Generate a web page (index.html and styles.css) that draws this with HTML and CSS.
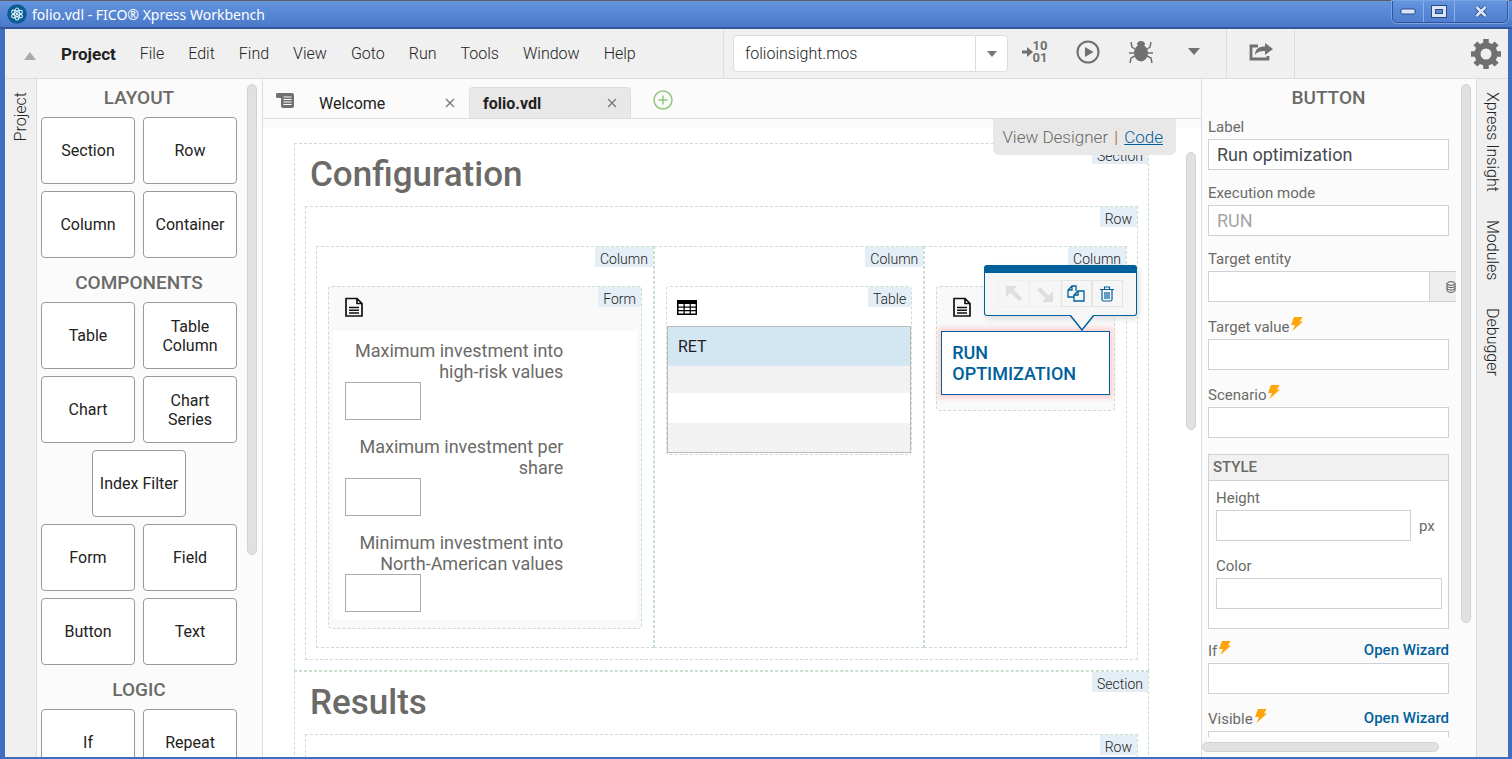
FILE: index.html
```
<!DOCTYPE html>
<html lang="en">
<head>
    <meta charset="UTF-8">
    <meta name="viewport" content="width=device-width, initial-scale=1.0">
    <title>folio.vdl - FICO® Xpress Workbench</title>
    <link rel="stylesheet" href="styles.css">
</head>
<body>
    <svg class="defs" width="0" height="0" aria-hidden="true">
        <symbol id="bolt" viewBox="0 0 12 14">
            <path d="M3 0h8.500L9 4.500h3L1.500 14 4 8H0z" fill="#ffa50a"/>
        </symbol>
        <symbol id="doc" viewBox="0 0 18 20">
            <path d="M1 1.500h11l5 5v12.500H1zM12 1.500v5h5" fill="none" stroke="#111" stroke-width="1.700" stroke-linejoin="round"/>
            <path d="M4 10.500h10M4 13.200h10M4 16h10" stroke="#111" stroke-width="1.400"/>
        </symbol>
        <symbol id="close" viewBox="0 0 10 10">
            <path d="M1 1l8 8M9 1L1 9" stroke="#777" stroke-width="1.300"/>
        </symbol>
    </svg>

    <div class="titlebar">
        <svg width="20" height="20" viewBox="0 0 20 20">
            <circle cx="10" cy="10" r="9.800" fill="#0a5d92"/>
            <g fill="none" stroke="#d4eef8" stroke-width="1.100">
                <ellipse cx="10" cy="10" rx="6" ry="2.400" transform="rotate(30 10 10)"/>
                <ellipse cx="10" cy="10" rx="6" ry="2.400" transform="rotate(90 10 10)"/>
                <ellipse cx="10" cy="10" rx="6" ry="2.400" transform="rotate(150 10 10)"/>
            </g>
            <circle cx="10" cy="10" r="1.300" fill="#d4eef8"/>
        </svg>
        <span class="window-title">folio.vdl - FICO® Xpress Workbench</span>
        <div class="window-buttons">
            <button aria-label="Minimize"><svg width="16" height="8" viewBox="0 0 16 8"><rect x="1" y="1" width="14" height="5" rx="1" fill="#dbe6f7" stroke="#2a4a85"/></svg></button>
            <button aria-label="Maximize"><svg width="16" height="13" viewBox="0 0 16 13"><rect x="2.500" y="2.500" width="11" height="8" fill="none" stroke="#2a4a85" stroke-width="5"/><rect x="2.500" y="2.500" width="11" height="8" fill="none" stroke="#dbe6f7" stroke-width="3"/><rect x="4.500" y="4.500" width="7" height="4" fill="none" stroke="#2a4a85"/></svg></button>
            <button class="close-window" aria-label="Close"><svg width="14" height="13" viewBox="0 0 14 13"><path d="M2.500 2l9 9M11.500 2l-9 9" stroke="#2a4a85" stroke-width="4.500"/><path d="M2.500 2l9 9M11.500 2l-9 9" stroke="#dbe6f7" stroke-width="2.800"/></svg></button>
        </div>
    </div>

    <div class="window">
        <header class="menubar">
            <button class="collapse" aria-label="Collapse menu"><svg width="12" height="8" viewBox="0 0 12 8"><path d="M0 8l6-8 6 8z" fill="#aaa"/></svg></button>
            <nav class="menu">
                <button class="bold">Project</button>
                <button>File</button>
                <button>Edit</button>
                <button>Find</button>
                <button>View</button>
                <button>Goto</button>
                <button>Run</button>
                <button>Tools</button>
                <button>Window</button>
                <button>Help</button>
            </nav>
            <div class="tools">
                <div class="combo">
                    <input type="text" value="folioinsight.mos" aria-label="Run target">
                    <button aria-label="Choose target"><svg width="10" height="6" viewBox="0 0 10 6"><path d="M0 0h10L5 6z" fill="#777"/></svg></button>
                </div>
                <button class="tool compile" aria-label="Compile">
                    <svg width="11" height="10" viewBox="0 0 11 10"><path d="M0 5h6" stroke="#707070" stroke-width="3"/><path d="M5 0l6 5-6 5z" fill="#707070"/></svg>
                    <span>10<br>01</span>
                </button>
                <button class="tool" aria-label="Run">
                    <svg width="24" height="24" viewBox="0 0 24 24"><circle cx="12" cy="12" r="10.500" fill="none" stroke="#707070" stroke-width="2"/><path d="M9 7l8.500 5L9 17z" fill="#707070"/></svg>
                </button>
                <button class="tool" aria-label="Debug">
                    <svg width="24" height="24" viewBox="0 0 24 24"><path d="M8 5a4 4 0 0 1 8 0z" fill="#707070"/><ellipse cx="12" cy="13" rx="7" ry="8.500" fill="#707070"/><path d="M6 9L3 7 2 2M18 9l3-2 1-5M5 13H0M19 13h5M6 16l-4 2-1 5M18 16l4 2 1 5" fill="none" stroke="#707070" stroke-width="1.500"/></svg>
                </button>
                <button class="tool" aria-label="More run options"><svg width="12" height="7" viewBox="0 0 12 7"><path d="M0 0h12L6 7z" fill="#707070"/></svg></button>
            </div>
            <div class="share">
                <button class="tool" aria-label="Share">
                    <svg width="24" height="18" viewBox="0 0 24 18"><path d="M9 3H2v13h17v-3" fill="none" stroke="#707070" stroke-width="2.800"/><path d="M6 12c0-6 4-8.500 10-8.500V0l8 6-8 6V8c-5 0-8 1-10 4z" fill="#707070"/></svg>
                </button>
            </div>
            <button class="settings" aria-label="Settings">
                <svg width="30" height="30" viewBox="0 0 30 30"><circle cx="15" cy="15" r="8.500" fill="none" stroke="#707070" stroke-width="6"/><path d="M15 0v5M15 25v5M0 15h5M25 15h5M4.400 4.400L8 8M22 22l3.600 3.600M4.400 25.600L8 22M22 8l3.600-3.600" stroke="#707070" stroke-width="5.500"/></svg>
            </button>
        </header>

        <div class="workspace">
            <aside class="rail rail-left">
                <button>Project</button>
            </aside>

            <aside class="palette">
                <div class="palette-items">
                    <h2>LAYOUT</h2>
                    <div class="blocks">
                        <button>Section</button>
                        <button>Row</button>
                        <button>Column</button>
                        <button>Container</button>
                    </div>
                    <h2>COMPONENTS</h2>
                    <div class="blocks">
                        <button>Table</button>
                        <button>Table Column</button>
                        <button>Chart</button>
                        <button>Chart Series</button>
                        <button class="single">Index Filter</button>
                        <button>Form</button>
                        <button>Field</button>
                        <button>Button</button>
                        <button>Text</button>
                    </div>
                    <h2>LOGIC</h2>
                    <div class="blocks">
                        <button>If</button>
                        <button>Repeat</button>
                    </div>
                </div>
                <div class="scrollbar palette-scroll"></div>
            </aside>

            <main class="editor">
                <div class="tabs">
                    <button class="tab-list" aria-label="Open tabs">
                        <svg width="18" height="15" viewBox="0 0 18 15"><path d="M2 0h14a2 2 0 0 1 2 2v11a2 2 0 0 1-2 2H7a2 2 0 0 1-2-2V5H2a2.500 2.500 0 0 1 0-5z" fill="#707070"/><path d="M7.500 4h8M7.500 6.500h8M7.500 9h8M7.500 11.500h8" stroke="#fff" stroke-width="1.200"/></svg>
                    </button>
                    <div class="tab">
                        <span>Welcome</span>
                        <button aria-label="Close Welcome"><svg width="10" height="10"><use href="#close"/></svg></button>
                    </div>
                    <div class="tab active">
                        <span>folio.vdl</span>
                        <button aria-label="Close folio.vdl"><svg width="10" height="10"><use href="#close"/></svg></button>
                    </div>
                    <button class="add-tab" aria-label="New tab">
                        <svg width="20" height="20" viewBox="0 0 20 20"><circle cx="10" cy="10" r="9" fill="none" stroke="#93c97b" stroke-width="1.500"/><path d="M10 5.500v9M5.500 10h9" stroke="#93c97b" stroke-width="1.500"/></svg>
                    </button>
                </div>

                <div class="design">
                    <div class="canvas">
                        <section class="box section">
                            <span class="tag">Section</span>
                            <h1>Configuration</h1>
                            <div class="box row">
                                <span class="tag">Row</span>
                                <div class="columns">
                                    <div class="box column">
                                        <span class="tag">Column</span>
                                        <div class="box component shaded">
                                            <span class="tag">Form</span>
                                            <div class="component-icon"><svg width="18" height="20"><use href="#doc"/></svg></div>
                                            <form class="form">
                                                <div class="form-field">
                                                    <label for="high-risk">Maximum investment into high-risk values</label>
                                                    <input id="high-risk" type="text">
                                                </div>
                                                <div class="form-field">
                                                    <label for="per-share">Maximum investment per share</label>
                                                    <input id="per-share" type="text">
                                                </div>
                                                <div class="form-field">
                                                    <label for="north-american">Minimum investment into North-American values</label>
                                                    <input id="north-american" type="text">
                                                </div>
                                            </form>
                                        </div>
                                    </div>
                                    <div class="box column">
                                        <span class="tag">Column</span>
                                        <div class="box component">
                                            <span class="tag">Table</span>
                                            <div class="component-icon table-icon">
                                                <svg width="20" height="15" viewBox="0 0 20 15"><rect width="20" height="15" fill="#000"/><path d="M1.500 4h5v2.500h-5zM7.800 4h4.800v2.500H7.800zM13.800 4h4.800v2.500h-4.800zM1.500 7.700h5v2.300h-5zM7.800 7.700h4.800v2.300H7.800zM13.800 7.700h4.800v2.300h-4.800zM1.500 11.200h5v2.300h-5zM7.800 11.200h4.800v2.300H7.800zM13.800 11.200h4.800v2.300h-4.800z" fill="#fff"/></svg>
                                            </div>
                                            <table class="grid">
                                                <thead><tr><th>RET</th></tr></thead>
                                                <tbody>
                                                    <tr><td></td></tr>
                                                    <tr><td></td></tr>
                                                    <tr><td></td></tr>
                                                </tbody>
                                            </table>
                                        </div>
                                    </div>
                                    <div class="box column">
                                        <span class="tag">Column</span>
                                        <div class="box component shaded">
                                            <div class="component-icon"><svg width="18" height="20"><use href="#doc"/></svg></div>
                                            <div class="selected">
                                                <button class="run-button">RUN OPTIMIZATION</button>
                                                <div class="popup">
                                                    <button disabled aria-label="Move up"><svg width="18" height="18" viewBox="0 0 18 18"><path d="M1 1h11L8.500 4.500 17 13l-3 3-8.500-8.500L1 12z" fill="#dedede"/></svg></button>
                                                    <button disabled aria-label="Move down"><svg width="18" height="18" viewBox="0 0 18 18"><path d="M17 17H6l3.500-3.500L1 5l3-3 8.500 8.500L17 6z" fill="#dedede"/></svg></button>
                                                    <button aria-label="Duplicate"><svg width="18" height="18" viewBox="0 0 18 18"><g fill="none" stroke="#00609c" stroke-width="1.300"><path d="M7 12H1V5l4-4h4v5M1 5h4V1"/><path d="M7 10l4-4h6v10H7zM7 10h4V6"/></g></svg></button>
                                                    <button aria-label="Delete"><svg width="14" height="16" viewBox="0 0 14 16"><path d="M0 3.500h14M4.500 3V1h5v2M2 4v9.500q0 1.500 1.500 1.500h7q1.500 0 1.500-1.500V4M5 6v7M7 6v7M9 6v7" fill="none" stroke="#00609c" stroke-width="1.200"/></svg></button>
                                                    <svg class="popup-arrow" width="24" height="16" viewBox="0 0 24 16"><path d="M0 0l12 15L24 0z" fill="#f6f6f6"/><path d="M0 0l12 15L24 0" fill="none" stroke="#00609c" stroke-width="1.500"/></svg>
                                                </div>
                                            </div>
                                        </div>
                                    </div>
                                </div>
                            </div>
                        </section>
                        <section class="box section">
                            <span class="tag">Section</span>
                            <h1>Results</h1>
                            <div class="box row">
                                <span class="tag">Row</span>
                            </div>
                        </section>
                    </div>
                    <div class="view-switch">View Designer <span class="divider">|</span> <a href="#">Code</a></div>
                    <div class="scrollbar canvas-scroll"></div>
                </div>
            </main>

            <aside class="properties">
                <div class="properties-top">
                    <div class="fields">
                        <h2>BUTTON</h2>
                        <div class="field">
                            <label for="label">Label</label>
                            <input id="label" type="text" value="Run optimization">
                        </div>
                        <div class="field">
                            <label for="mode">Execution mode</label>
                            <input id="mode" type="text" placeholder="RUN">
                        </div>
                        <div class="field">
                            <label for="entity">Target entity</label>
                            <div class="input-group">
                                <input id="entity" type="text">
                                <button aria-label="Pick entity"><svg width="10" height="12" viewBox="0 0 10 12"><g fill="none" stroke="#555"><ellipse cx="5" cy="2.500" rx="4" ry="1.800"/><path d="M1 2.500v7c0 2.400 8 2.400 8 0v-7M1 5c0 2 8 2 8 0M1 7.500c0 2 8 2 8 0"/></g></svg></button>
                            </div>
                        </div>
                        <div class="field">
                            <label class="dynamic" for="value">Target value<svg width="12" height="14"><use href="#bolt"/></svg></label>
                            <input id="value" type="text">
                        </div>
                        <div class="field">
                            <label class="dynamic" for="scenario">Scenario<svg width="12" height="14"><use href="#bolt"/></svg></label>
                            <input id="scenario" type="text">
                        </div>
                        <div class="group">
                            <h3>STYLE</h3>
                            <div class="field">
                                <label for="height">Height</label>
                                <div class="with-unit">
                                    <input id="height" type="text">
                                    <span>px</span>
                                </div>
                            </div>
                            <div class="field">
                                <label for="color">Color</label>
                                <input id="color" type="text">
                            </div>
                        </div>
                        <div class="field">
                            <div class="field-head">
                                <label class="dynamic" for="if">If<svg width="12" height="14"><use href="#bolt"/></svg></label>
                                <a href="#">Open Wizard</a>
                            </div>
                            <input id="if" type="text">
                        </div>
                        <div class="field">
                            <div class="field-head">
                                <label class="dynamic" for="visible">Visible<svg width="12" height="14"><use href="#bolt"/></svg></label>
                                <a href="#">Open Wizard</a>
                            </div>
                            <input id="visible" type="text">
                        </div>
                    </div>
                    <div class="scrollbar properties-scroll"></div>
                </div>
                <div class="scrollbar horizontal"></div>
            </aside>

            <aside class="rail rail-right">
                <button>Xpress Insight</button>
                <button>Modules</button>
                <button>Debugger</button>
            </aside>
        </div>
    </div>
</body>
</html>
```
FILE: styles.css
```
* {
    margin: 0;
    padding: 0;
    box-sizing: border-box;
}

body {
    display: flex;
    flex-direction: column;
    height: 100vh;
    overflow: hidden;
    background: #3f6dc0;
    color: #222;
    font-family: Roboto, sans-serif;
    font-size: 16px;
}

button, input {
    font: inherit;
    color: inherit;
}

button {
    background: none;
    border: none;
    cursor: pointer;
}

svg {
    display: block;
    flex: none;
}

.defs {
    position: absolute;
}

/* window frame */

.titlebar {
    display: flex;
    align-items: center;
    height: 29px;
    flex: none;
    padding: 0 4px 0 7px;
    gap: 5px;
    background: linear-gradient(#6495de, #4a78ca);
    border-top: 1px solid #5c5f66;
    border-bottom: 2px solid #34569c;
    color: #fff;
}

.window-title {
    flex: 1;
    font-family: "Noto Sans", sans-serif;
    font-size: 14px;
}

.window-buttons {
    display: flex;
    align-self: flex-start;
    height: 22px;
    border: 1px solid #34569c;
    border-top: none;
    border-radius: 0 0 5px 5px;
    box-shadow: 0 0 0 1px #7ba3e4;
}

.window-buttons button {
    display: flex;
    align-items: center;
    justify-content: center;
    width: 31px;
    border-right: 1px solid #8db0ea;
}

.window-buttons .close-window {
    width: 52px;
    border-right: none;
}

.window {
    flex: 1;
    min-height: 0;
    display: flex;
    flex-direction: column;
    margin: 0 4px 2px 5px;
    background: #fbfbfb;
}

/* menu bar */

.menubar {
    display: flex;
    height: 50px;
    flex: none;
    background: #f0f0f0;
    border-bottom: 1px solid #ddd;
}

.collapse {
    padding: 4px 10px 0 19px;
}

.menu {
    display: flex;
    flex: 1;
    padding-left: 3px;
}

.menu button {
    padding: 0 12px;
    font-weight: 300;
}

.menu .bold {
    font-size: 17px;
    font-weight: bold;
}

.tools {
    display: flex;
    align-items: center;
    padding: 0 6px 0 9px;
    border-left: 1px solid #ddd;
    border-right: 1px solid #ddd;
}

.combo {
    display: flex;
    width: 275px;
    height: 37px;
    background: #fff;
    border: 1px solid #ddd;
    border-radius: 4px;
}

.combo input {
    flex: 1;
    min-width: 0;
    padding: 0 11px;
    border: none;
    background: none;
    font-weight: 300;
}

.combo button {
    display: flex;
    align-items: center;
    justify-content: center;
    width: 32px;
    border-left: 1px solid #ddd;
}

.tool {
    display: flex;
    align-items: center;
    justify-content: center;
    width: 53px;
    height: 46px;
}

.tools .tool {
    padding-bottom: 4px;
}

.compile span {
    color: #707070;
    font-size: 13px;
    font-weight: bold;
    line-height: 12px;
}

.share {
    display: flex;
    width: 68px;
    justify-content: center;
    border-right: 1px solid #ddd;
}

.settings {
    margin-left: 176px;
    padding-right: 7px;
}

/* side rails */

.workspace {
    display: flex;
    flex: 1;
    min-height: 0;
}

.rail {
    display: flex;
    flex-direction: column;
    align-items: center;
    gap: 28px;
    width: 32px;
    flex: none;
    padding-top: 13px;
    background: #f0f0f0;
}

.rail button {
    writing-mode: vertical-rl;
    font-weight: 300;
}

.rail-left {
    border-right: 1px solid #ddd;
}

.rail-left button {
    transform: rotate(180deg);
}

.rail-right {
    border-left: 1px solid #ddd;
}

.scrollbar {
    width: 10px;
    background: #e1e1e1;
    border: 1px solid #d2d2d2;
    border-radius: 5px;
}

h2 {
    color: #6b6a67;
    font-size: 19px;
    font-weight: 500;
    line-height: 26px;
    text-align: center;
}

/* palette */

.palette {
    display: flex;
    width: 226px;
    flex: none;
    gap: 10px;
    overflow: hidden;
    padding-left: 4px;
    border-right: 1px solid #ddd;
}

.palette-items {
    padding-top: 6px;
}

.blocks {
    display: grid;
    grid-template-columns: 94px 94px;
    grid-auto-rows: 67px;
    gap: 7px 8px;
    margin: 6px 0 12px;
}

.blocks button {
    padding: 0 10px;
    background: #fff;
    border: 1px solid #999;
    border-radius: 4px;
    line-height: 19px;
}

.blocks .single {
    grid-column: span 2;
    justify-self: center;
    width: 94px;
    padding: 0;
}

.palette-scroll {
    height: 471px;
    margin-top: 5px;
}

/* editor */

.editor {
    display: flex;
    flex-direction: column;
    flex: 1;
    min-width: 0;
    background: #fff;
}

.tabs {
    display: flex;
    align-items: flex-end;
    height: 40px;
    flex: none;
    background: #fbfbfb;
    border-bottom: 1px solid #ddd;
}

.tab-list {
    width: 42px;
    padding: 0 0 10px 13px;
}

.tab {
    display: flex;
    align-items: center;
    justify-content: space-between;
    width: 164px;
    height: 31px;
    padding: 1px 14px 0;
}

.active {
    width: 162px;
    background: #e8e8e8;
    border: 1px solid #ddd;
    border-bottom: none;
    border-radius: 4px 4px 0 0;
    padding: 0 13px;
    font-weight: bold;
}

.add-tab {
    padding: 0 22px 8px;
}

.design {
    position: relative;
    flex: 1;
    min-height: 0;
    overflow: hidden;
}

.canvas {
    padding: 15px 52px 0 31px;
    border-top: 9px solid #fbfbfb;
}

.view-switch {
    position: absolute;
    top: 0;
    right: 25px;
    padding: 0 13px 0 9px;
    background: #e8e8e8;
    border-radius: 0 0 6px 6px;
    color: #6b6a67;
    font-size: 17px;
    font-weight: 300;
    line-height: 36px;
}

.divider {
    margin: 0 2px;
    color: #a0561c;
}

a {
    color: #00609c;
}

.canvas-scroll {
    position: absolute;
    top: 33px;
    right: 5px;
    height: 278px;
}

.box {
    position: relative;
    border: 1px dashed #cadecd;
}

.tag {
    position: absolute;
    top: 0;
    right: 0;
    padding: 4px 5px 0;
    height: 20px;
    background: #e4eef6;
    color: #222;
    font-size: 14px;
    font-weight: 300;
    line-height: 16px;
}

.section {
    padding: 0 10px 10px;
}

.section h1 {
    padding-left: 5px;
    color: #6b6a67;
    font-size: 35px;
    font-weight: 500;
    line-height: 62px;
}

.row {
    min-height: 60px;
    padding: 39px 10px 11px;
}

.columns {
    display: grid;
    grid-template-columns: 5fr 4fr 3fr;
}

.column {
    min-width: 0;
    padding: 39px 11px 18px;
}

.component {
    border-radius: 4px;
}

.shaded {
    padding: 0 4px 8px;
    background: #f9f9f9;
}

.component-icon {
    height: 44px;
    padding: 10px 12px 0;
}

.table-icon {
    height: 39px;
    padding: 13px 10px 0;
}

.form {
    display: flex;
    flex-direction: column;
    gap: 16px;
    padding: 9px 12px 8px;
    background: #fff;
}

.form-field label {
    display: block;
    width: 78%;
    color: #6b6a67;
    font-size: 18px;
    line-height: 21px;
    text-align: right;
}

.form-field input {
    display: block;
    width: 76px;
    height: 38px;
    border: 1px solid #aaa;
}

.grid {
    width: 100%;
    border-collapse: collapse;
    border: 1px solid #bbb;
    margin-bottom: 1px;
}

.grid th {
    height: 39px;
    padding: 0 10px;
    background: #d2e7f2;
    font-size: 16px;
    font-weight: normal;
    text-align: left;
}

.grid td {
    height: 30px;
}

.grid tr:first-child td {
    height: 27px;
}

.grid tbody tr:nth-child(odd) {
    background: #f2f2f2;
}

.selected {
    position: relative;
    padding-bottom: 7px;
}

.run-button {
    display: block;
    width: 100%;
    padding: 10px;
    background: #fff;
    border: 1px solid #00609c;
    box-shadow: 0 0 5px 3px #fcd0d0;
    color: #00609c;
    font-size: 18px;
    font-weight: 500;
    line-height: 21px;
    text-align: left;
}

.popup {
    position: absolute;
    right: -27px;
    bottom: 86px;
    display: flex;
    width: 153px;
    height: 51px;
    padding: 7px 13px 8px;
    background: #f6f6f6;
    border: 1px solid #00609c;
    border-top-width: 8px;
    border-radius: 3px;
    box-shadow: 2px 3px 6px #ddd;
}

.popup button {
    display: flex;
    flex: 1;
    align-items: center;
    justify-content: center;
    border: 1px solid #e4e4e4;
}

.popup button:disabled {
    border-color: #f0f0f0;
}

.popup-arrow {
    position: absolute;
    top: 42px;
    right: 42px;
}

/* properties */

.properties {
    display: flex;
    flex-direction: column;
    width: 275px;
    flex: none;
    border-left: 1px solid #ddd;
    color: #6b6a67;
    font-size: 15px;
}

.properties-top {
    display: flex;
    flex: 1;
    min-height: 0;
    gap: 5px;
}

.fields {
    width: 254px;
    overflow: hidden;
    padding: 6px 7px 0 6px;
}

.fields h2 {
    margin-bottom: 8px;
}

.field {
    margin-bottom: 15px;
}

.field label {
    display: flex;
    height: 20px;
    line-height: 16px;
}

.field .dynamic {
    gap: 2px;
    height: 22px;
    line-height: 20px;
}

.field input {
    display: block;
    width: 100%;
    height: 31px;
    padding: 0 8px;
    background: #fff;
    border: 1px solid #cdd1d8;
    color: #444b50;
    font-size: 18px;
}

.field input::placeholder {
    color: #a5a5a5;
}

.input-group {
    display: flex;
    width: 265px;
}

.input-group input {
    width: 222px;
}

.input-group button {
    flex: 1;
    padding-left: 16px;
    background: #eee;
    border: 1px solid #cdcdcd;
    border-left: none;
}

.group {
    margin: 16px 0 12px;
    padding-bottom: 2px;
    background: #fff;
    border: 1px solid #cdd1d8;
}

.group h3 {
    height: 26px;
    margin-bottom: 9px;
    padding-left: 4px;
    background: #f1f1f1;
    border-bottom: 1px solid #cdd1d8;
    font-size: 15px;
    font-weight: 500;
    line-height: 24px;
}

.group .field {
    margin: 0 6px 17px 7px;
}

.with-unit {
    display: flex;
    align-items: center;
    gap: 8px;
}

.with-unit input {
    width: 195px;
}

.field-head {
    display: flex;
    justify-content: space-between;
}

.field-head a {
    font-weight: 500;
    line-height: 18px;
    text-decoration: none;
}

.properties-scroll {
    height: 539px;
    margin-top: 5px;
}

.horizontal {
    width: 237px;
    height: 10px;
    margin: 5px 0;
    flex: none;
}
```
